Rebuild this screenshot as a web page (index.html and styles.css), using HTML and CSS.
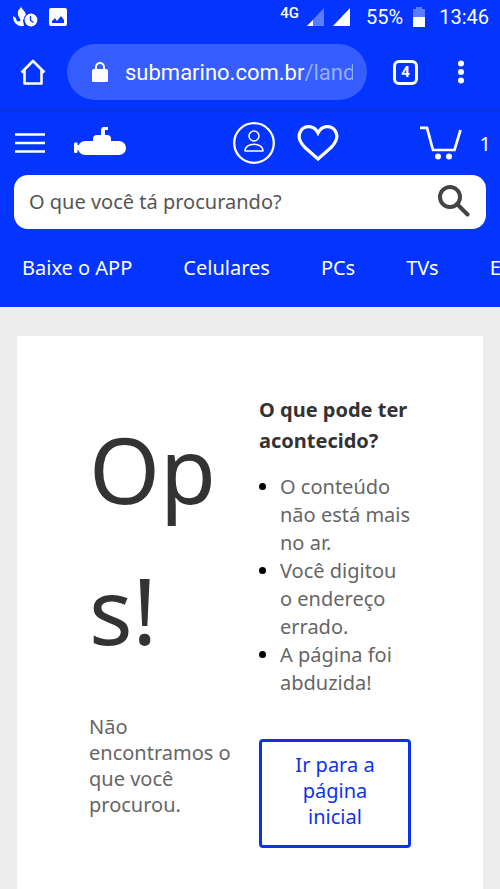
FILE: index.html
```html
<!DOCTYPE html>
<html lang="pt-BR">
<head>
<meta charset="utf-8">
<meta name="viewport" content="width=device-width, initial-scale=1">
<title>Submarino</title>
<link rel="stylesheet" href="styles.css">
</head>
<body>
<div class="chrome">
  <div class="status">
    <div class="status-left">
      <svg width="26" height="22" viewBox="0 0 26 22" fill="#fff" aria-hidden="true"><path d="M8 0c0 3 6 6 5 11l-3 3 1 6C5 21 0 17 0 10l3 2c0 3 2 4 4 3 2-2-3-4-2-9 0-3 3-3 3-6z"/><circle cx="18" cy="14" r="7.5" fill="#0434ff"/><circle cx="18" cy="14" r="6.4"/><path d="M17.500 10v4.500l3 2" fill="none" stroke="#0434ff" stroke-width="1.300"/></svg>
      <svg width="18" height="18" viewBox="0 0 18 18" aria-hidden="true"><rect width="18" height="18" rx="2" fill="#fff"/><path d="M3 15v-2l3-3 2 3 4-5 3 4v3z" fill="#0434ff"/></svg>
    </div>
    <div class="status-right">
      <span class="network">4G</span>
      <svg class="signal" width="17" height="18" viewBox="0 0 17 18" aria-hidden="true"><path d="M0 18L17 0v18z" fill="#5c7dff"/><path d="M0 18l6-6v6z" fill="#fff"/></svg>
      <svg class="signal-full" width="17" height="18" viewBox="0 0 17 18" aria-hidden="true"><path d="M0 18L17 0v18z" fill="#fff"/></svg>
      <span class="percent">55%</span>
      <svg class="battery" width="12" height="20" viewBox="0 0 12 20" aria-hidden="true"><path d="M0 2h3V0h6v2h3v8H0z" fill="#5c7dff"/><path d="M0 10h12v10H0z" fill="#fff"/></svg>
      <span>13:46</span>
    </div>
  </div>
  <div class="toolbar">
    <button class="icon" aria-label="Página inicial"><svg width="26" height="26" viewBox="0 0 26 26" fill="none" stroke="#fff" stroke-width="2.600"><path d="M1.500 13.500L13 2l11.500 11.500M4.500 11v13.500h17V11" stroke-linejoin="round"/></svg></button>
    <div class="address">
      <svg width="16" height="20" viewBox="0 0 16 20" aria-hidden="true"><rect y="7" width="16" height="13" rx="1.500" fill="#fff"/><path d="M4 8V5a4 4 0 0 1 8 0v3" fill="none" stroke="#fff" stroke-width="2"/></svg>
      <span class="url">submarino.com.br<span class="path">/landing</span></span>
    </div>
    <button class="tabs" aria-label="Abas">4</button>
    <button class="icon more" aria-label="Mais opções"><svg width="6" height="24" viewBox="0 0 6 24" fill="#fff"><circle cx="3" cy="3.500" r="3"/><circle cx="3" cy="12" r="3"/><circle cx="3" cy="20.500" r="3"/></svg></button>
  </div>
</div>
<header class="header">
  <div class="brand-row">
    <button class="icon" aria-label="Menu"><svg width="30" height="20" viewBox="0 0 30 20" stroke="#fff" stroke-width="2.400"><path d="M0 1.500h30M0 10h30M0 18.500h30"/></svg></button>
    <a class="logo" href="#" aria-label="Submarino"><svg width="53" height="29" viewBox="0 0 53 29" fill="#fff"><rect x="4" y="14" width="48" height="14" rx="7"/><path d="M19 15v-3q0-4 4-4h4V3q0-3 3-3h4v3h-3v5h2q4 0 4 4v3z"/><rect y="15.500" width="3.500" height="10.500" rx="1"/><path d="M3 18h4v5H3z"/></svg></a>
    <a class="account" href="#" aria-label="Minha conta"><svg width="42" height="42" viewBox="0 0 42 42" fill="none" stroke="#fff"><circle cx="21" cy="21" r="19.800" stroke-width="2.300"/><circle cx="21" cy="14" r="5" stroke-width="1.500"/><path d="M12 29c0-9 18-9 18 0z" stroke-width="1.500" stroke-linejoin="round"/></svg></a>
    <a class="heart" href="#" aria-label="Favoritos"><svg width="42" height="36" viewBox="0 0 42 36" fill="none" stroke="#fff" stroke-width="3.200"><path d="M21 8C17 0 8 0 4 5.500c-4 6-1 12 4 17L21 34l13-11.500c5-5 8-11 4-17C34 0 25 0 21 8z"/></svg></a>
    <a class="cart" href="#" aria-label="Carrinho, 1 item"><svg width="42" height="34" viewBox="0 0 42 34" fill="none" stroke="#fff" stroke-width="2.700"><path d="M0 1.800h7L13 24h21.500L40.500 4"/><g fill="#fff" stroke="none"><circle cx="18" cy="30.500" r="3"/><circle cx="29" cy="30.500" r="3"/></g></svg><span>1</span></a>
  </div>
  <form class="search">
    <input type="text" aria-label="Buscar produtos" placeholder="O que você tá procurando?">
    <button class="icon" type="button" aria-label="Buscar"><svg width="32" height="32" viewBox="0 0 32 32" fill="none" stroke="#444" stroke-width="4"><circle cx="12" cy="12" r="10"/><path d="M19 19l10.500 10.500" stroke-linecap="round"/></svg></button>
  </form>
  <nav class="nav">
    <a href="#">Baixe o APP</a><a href="#">Celulares</a><a href="#">PCs</a><a href="#">TVs</a><a href="#">Eletro</a>
  </nav>
</header>
<main class="page">
  <section class="card">
    <div>
      <h1>Ops!</h1>
      <p>Não encontramos o que você procurou.</p>
    </div>
    <div>
      <h2>O que pode ter<br>acontecido?</h2>
      <ul>
        <li>O conteúdo não está mais no ar.</li>
        <li>Você digitou o endereço errado.</li>
        <li>A página foi abduzida!</li>
      </ul>
      <a class="home" href="#">Ir para a página inicial</a>
    </div>
  </section>
</main>
</body>
</html>
```
FILE: styles.css
```css
* { box-sizing: border-box; }
body {
  margin: 0;
  min-height: 100vh;
  display: flex;
  flex-direction: column;
  background: #ededed;
  color: #666;
  font-family: "Noto Sans", "Open Sans", sans-serif;
  font-size: 20px;
  overflow-x: hidden;
}
svg { display: block; flex: none; }
a { color: inherit; text-decoration: none; }
button { font: inherit; color: inherit; }
.icon { padding: 0; border: 0; background: none; }

.chrome { background: #0434ff; color: #fff; font-family: Roboto, sans-serif; }
.status {
  display: flex;
  justify-content: space-between;
  align-items: center;
  height: 34px;
  padding: 0 11px 0 13px;
  font-size: 20px;
}
.status-left, .status-right { display: flex; align-items: center; }
.status-left { gap: 10px; }
.network { margin: 0 8px 8px 0; font-size: 15px; font-weight: 500; line-height: 16px; }
.signal { margin-right: 9px; }
.signal-full { margin-right: 16px; }
.percent { margin-right: 10px; }
.battery { margin-right: 14px; }
.toolbar {
  display: flex;
  align-items: center;
  height: 78px;
  padding: 2px 36px 0 20px;
  border-bottom: 4px solid #0733e6;
}
.address {
  display: flex;
  flex: 1;
  align-items: center;
  gap: 17px;
  min-width: 0;
  height: 56px;
  margin: 0 26px 0 21px;
  padding: 0 14px 0 25px;
  border-radius: 28px;
  background: #365dff;
}
.url { flex: 1; min-width: 0; overflow: hidden; white-space: nowrap; font-size: 22px; }
.path { color: #9aaeff; }
.tabs {
  width: 25px;
  height: 25px;
  padding: 0;
  border: 3px solid #fff;
  border-radius: 6px;
  background: none;
  font-size: 15px;
  font-weight: 700;
  line-height: 18px;
}
.more { margin-left: 40px; }

.header { background: #0434ff; color: #fff; padding: 8px 14px 0; }
.brand-row { display: flex; align-items: center; height: 46px; margin-bottom: 9px; padding-left: 1px; }
.logo { margin: -4px 0 0 29px; }
.account { margin-left: 106px; }
.heart { margin-left: 22px; }
.cart { display: flex; align-items: center; gap: 18px; margin: 0 -5px 0 auto; }
.search {
  display: flex;
  align-items: center;
  height: 54px;
  padding: 0 16px 2px 15px;
  border-radius: 14px;
  background: #fff;
}
.search input {
  flex: 1;
  min-width: 0;
  padding: 0;
  border: 0;
  outline: 0;
  background: none;
  color: #444;
  font: inherit;
}
.search input::placeholder { color: #555; opacity: 1; }
.nav {
  display: flex;
  align-items: center;
  gap: 51px;
  height: 78px;
  margin-right: -14px;
  padding: 0 0 2px 8px;
  overflow: hidden;
  white-space: nowrap;
}

.page { display: flex; flex: 1; padding: 29px 17px 0; }
.card {
  display: grid;
  flex: 1;
  grid-template-columns: 143fr 152fr;
  column-gap: 27px;
  padding: 58px 72px 41px;
  background: #fff;
}
h1 {
  margin: 5px 0 33px;
  color: #333;
  font-size: 91px;
  font-weight: 400;
  line-height: 141px;
  word-break: break-all;
}
p { margin: 0; line-height: 26px; }
h2 { margin: 0 0 17px; color: #333; font-size: 20px; font-weight: 700; line-height: 31px; white-space: nowrap; }
ul { margin: 0 0 42px; padding-left: 21px; line-height: 28px; }
li::marker { color: #000; }
.home {
  display: block;
  padding: 10px 20px 15px;
  border: 3px solid #0c33e8;
  border-radius: 4px;
  color: #0c33e8;
  line-height: 26px;
  text-align: center;
}
```
